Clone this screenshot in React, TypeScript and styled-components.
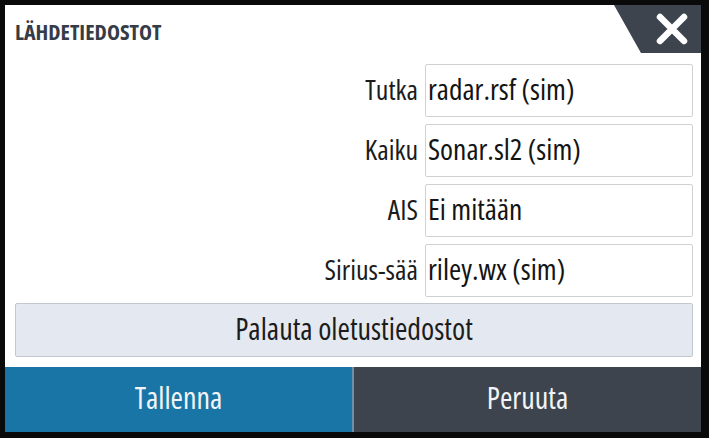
import styled, { createGlobalStyle } from "styled-components";

const GlobalStyle = createGlobalStyle`
    html, body {
        margin: 0;
        padding: 0;
        background: #000;
    }
    * {
        box-sizing: border-box;
    }
`;

const Frame = styled.div`
    width: 709px;
    height: 438px;
    border-style: solid;
    border-color: #0a0a0a;
    border-width: 5px 8px 6px 5px;
    background: #fff;
    display: flex;
    flex-direction: column;
    font-family: "Open Sans", "Noto Sans", sans-serif;
    font-stretch: 75%;
    color: #1c1c1c;
`;

const Header = styled.div`
    height: 50px;
    display: flex;
    align-items: flex-start;
    justify-content: space-between;
`;

const Title = styled.h1`
    margin: 0;
    padding: 11px 0 0 10px;
    font-size: 22px;
    font-weight: 700;
    color: #363c46;
`;

const CloseTab = styled.button`
    width: 87px;
    height: 48px;
    border: none;
    padding: 0 0 0 28px;
    background: #3d444e;
    clip-path: polygon(0 0, 100% 0, 100% 100%, 31% 100%);
    display: flex;
    align-items: center;
    justify-content: center;
    cursor: pointer;
`;

const Body = styled.div`
    flex: 1;
    display: flex;
    flex-direction: column;
    gap: 7px;
    padding: 9px 8px 10px 10px;
`;

const Row = styled.div`
    display: flex;
    align-items: center;
    gap: 7px;
    height: 53px;
`;

const Label = styled.label`
    flex: 1;
    text-align: right;
    font-size: 28px;
    padding-bottom: 3px;
`;

const Field = styled.div`
    width: 268px;
    height: 53px;
    border: 1px solid #cfd1d4;
    border-radius: 2px;
    padding: 0 0 4px 2px;
    display: flex;
    align-items: center;
    font-size: 29.5px;
    color: #141414;
`;

const ResetButton = styled.button`
    margin-top: -1px;
    width: 678px;
    height: 54px;
    border: 1px solid #c3c7cf;
    border-radius: 2px;
    background: #e4e8f0;
    font-family: inherit;
    font-stretch: inherit;
    font-size: 30px;
    color: #1c1c1c;
    padding-bottom: 5px;
`;

const Footer = styled.div`
    height: 65px;
    display: flex;
`;

const FooterButton = styled.button<{ $primary?: boolean }>`
    flex: 1;
    border: none;
    background: ${(p) => (p.$primary ? "#1a75a7" : "#3d444e")};
    color: #f2f4f6;
    font-family: inherit;
    font-stretch: inherit;
    font-size: 30px;
    padding-bottom: 6px;
    border-right: ${(p) => (p.$primary ? "2px solid #6f8ea8" : "none")};
`;

const rows = [
    { label: "Tutka", value: "radar.rsf (sim)" },
    { label: "Kaiku", value: "Sonar.sl2 (sim)" },
    { label: "AIS", value: "Ei mitään" },
    { label: "Sirius-sää", value: "riley.wx (sim)" },
];

export default function App() {
    return (
        <>
            <GlobalStyle />
            <Frame>
                <Header>
                    <Title>LÄHDETIEDOSTOT</Title>
                    <CloseTab aria-label="Sulje">
                        <svg width="34" height="34" viewBox="0 0 34 34">
                            <path
                                d="M5 5 L29 29 M29 5 L5 29"
                                stroke="#fff"
                                strokeWidth="6.5"
                                strokeLinecap="round"
                            />
                        </svg>
                    </CloseTab>
                </Header>
                <Body>
                    {rows.map((r) => (
                        <Row key={r.label}>
                            <Label>{r.label}</Label>
                            <Field>{r.value}</Field>
                        </Row>
                    ))}
                    <ResetButton>Palauta oletustiedostot</ResetButton>
                </Body>
                <Footer>
                    <FooterButton $primary>Tallenna</FooterButton>
                    <FooterButton>Peruuta</FooterButton>
                </Footer>
            </Frame>
        </>
    );
}
